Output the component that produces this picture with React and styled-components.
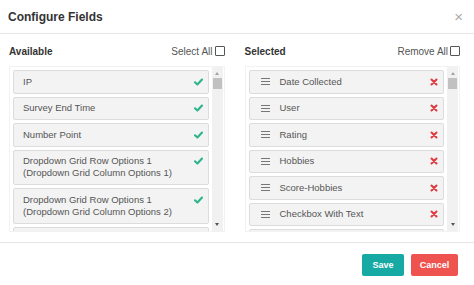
import React from 'react';
import styled, { createGlobalStyle } from 'styled-components';

const GlobalStyle = createGlobalStyle`
  html, body {
    margin: 0;
    padding: 0;
    background: #fff;
    font-family: "Liberation Sans", Arial, sans-serif;
  }
`

const Modal = styled.div`
  width: 474px;
  height: 285px;
  display: flex;
  flex-direction: column;
  background: #fff;
  overflow: hidden;
`

const Header = styled.div`
  height: 33px;
  display: flex;
  align-items: center;
  justify-content: space-between;
  padding: 0 11px 0 8px;
  border-bottom: 1px solid #e6e6e6;
`

const Title = styled.h1`
  margin: 0;
  font-size: 12px;
  font-weight: bold;
  color: #333;
`

const Close = styled.span`
  font-size: 15px;
  color: #aaa;
  line-height: 1;
`

const Body = styled.div`
  display: grid;
  grid-template-columns: 1fr 1fr;
  column-gap: 20px;
  padding: 9px 14px 10px 9px;
`

const Column = styled.div`
  display: flex;
  flex-direction: column;
`

const ColHead = styled.div`
  height: 16px;
  margin-bottom: 7px;
  display: flex;
  align-items: center;
  justify-content: space-between;
  font-size: 10px;
  color: #444;
`

const ColTitle = styled.span`
  font-weight: bold;
  color: #333;
`

const AllToggle = styled.label`
  display: flex;
  align-items: center;
  gap: 2px;
  color: #555;
`

const Box = styled.span`
  width: 8px;
  height: 8px;
  border: 1px solid #555;
  border-radius: 1px;
  background: #fff;
`

const ListBox = styled.div`
  height: 164px;
  display: flex;
  border: 1px solid #f2f2f2;
  padding-left: 3px;
`

const Items = styled.div`
  flex: 1;
  overflow: hidden;
  display: flex;
  flex-direction: column;
  gap: 3px;
  padding: 3px 3px 0 0;
`

const Item = styled.div`
  flex-shrink: 0;
  display: flex;
  align-items: flex-start;
  gap: ${p => (p.$handle ? '10px' : '6px')};
  padding: 4.75px 5px 4.75px ${p => (p.$handle ? '11px' : '9px')};
  background: #f3f3f3;
  border: 1px solid #dcdcdc;
  border-radius: 2px;
  font-size: 9.5px;
  line-height: 12px;
  color: #555;
`

const Label = styled.span`
  flex: 1;
  padding-right: 6px;
`

const Mark = styled.span`
  width: 9px;
  height: 12px;
  display: flex;
  align-items: center;
  justify-content: center;
  flex-shrink: 0;
`

const Scroll = styled.div`
  width: 11px;
  margin-right: 1px;
  background: #f1f1f1;
  display: flex;
  flex-direction: column;
  align-items: center;
`

const Arrow = styled.span`
  width: 0;
  height: 0;
  margin: ${p => (p.$down ? 'auto 0 5px' : '5px 0 0')};
  border-left: 2.5px solid transparent;
  border-right: 2.5px solid transparent;
  ${p => (p.$down ? 'border-top: 3px solid #555;' : 'border-bottom: 3px solid #a3a3a3;')}
`

const Thumb = styled.div`
  width: 9px;
  height: 11px;
  margin-top: 3px;
  background: #c1c1c1;
`

const Footer = styled.div`
  border-top: 1px solid #e6e6e6;
  display: flex;
  justify-content: flex-end;
  gap: 7px;
  padding: 11px 16px 0 0;
`

const Button = styled.button`
  width: ${p => p.$w}px;
  height: 22px;
  padding: 0;
  border: none;
  border-radius: 2px;
  background: ${p => (p.$danger ? '#ef5350' : '#17a9a4')};
  color: #fff;
  font-family: "Liberation Sans", Arial, sans-serif;
  font-size: 9px;
  font-weight: bold;
`

const Check = () => (
  <svg width="9" height="8" viewBox="0 0 9 8">
    <path d="M1 4.3 L3.4 6.5 L8 1.5" fill="none" stroke="#2db48c" strokeWidth="2.1" strokeLinecap="round" strokeLinejoin="round" />
  </svg>
)

const Cross = () => (
  <svg width="8" height="8" viewBox="0 0 8 8">
    <path d="M1.5 1.5 L6.5 6.5 M6.5 1.5 L1.5 6.5" stroke="#e0393e" strokeWidth="2" strokeLinecap="round" />
  </svg>
)

const Handle = () => (
  <svg width="9" height="7" viewBox="0 0 9 7">
    <path d="M0 0.5 H9 M0 3.5 H9 M0 6.5 H9" stroke="#777" strokeWidth="1" />
  </svg>
)

const available = [
  'IP',
  'Survey End Time',
  'Number Point',
  'Dropdown Grid Row Options 1 (Dropdown Grid Column Options 1)',
  'Dropdown Grid Row Options 1 (Dropdown Grid Column Options 2)',
  'Dropdown Grid Row Options 2 (Dropdown Grid Column Options 1)',
]

const selected = [
  'Date Collected',
  'User',
  'Rating',
  'Hobbies',
  'Score-Hobbies',
  'Checkbox With Text',
  'Short Answer',
]

const ScrollBar = () => (
  <Scroll>
    <Arrow />
    <Thumb />
    <Arrow $down />
  </Scroll>
)

export default function App() {
  return (
    <Modal>
      <GlobalStyle />
      <Header>
        <Title>Configure Fields</Title>
        <Close>×</Close>
      </Header>
      <Body>
        <Column>
          <ColHead>
            <ColTitle>Available</ColTitle>
            <AllToggle>Select All <Box /></AllToggle>
          </ColHead>
          <ListBox>
            <Items>
              {available.map(name => (
                <Item key={name}>
                  <Label>{name}</Label>
                  <Mark><Check /></Mark>
                </Item>
              ))}
            </Items>
            <ScrollBar />
          </ListBox>
        </Column>
        <Column>
          <ColHead>
            <ColTitle>Selected</ColTitle>
            <AllToggle>Remove All <Box /></AllToggle>
          </ColHead>
          <ListBox>
            <Items>
              {selected.map(name => (
                <Item key={name} $handle>
                  <Mark><Handle /></Mark>
                  <Label>{name}</Label>
                  <Mark><Cross /></Mark>
                </Item>
              ))}
            </Items>
            <ScrollBar />
          </ListBox>
        </Column>
      </Body>
      <Footer>
        <Button $w={42}>Save</Button>
        <Button $w={47} $danger>Cancel</Button>
      </Footer>
    </Modal>
  );
}
